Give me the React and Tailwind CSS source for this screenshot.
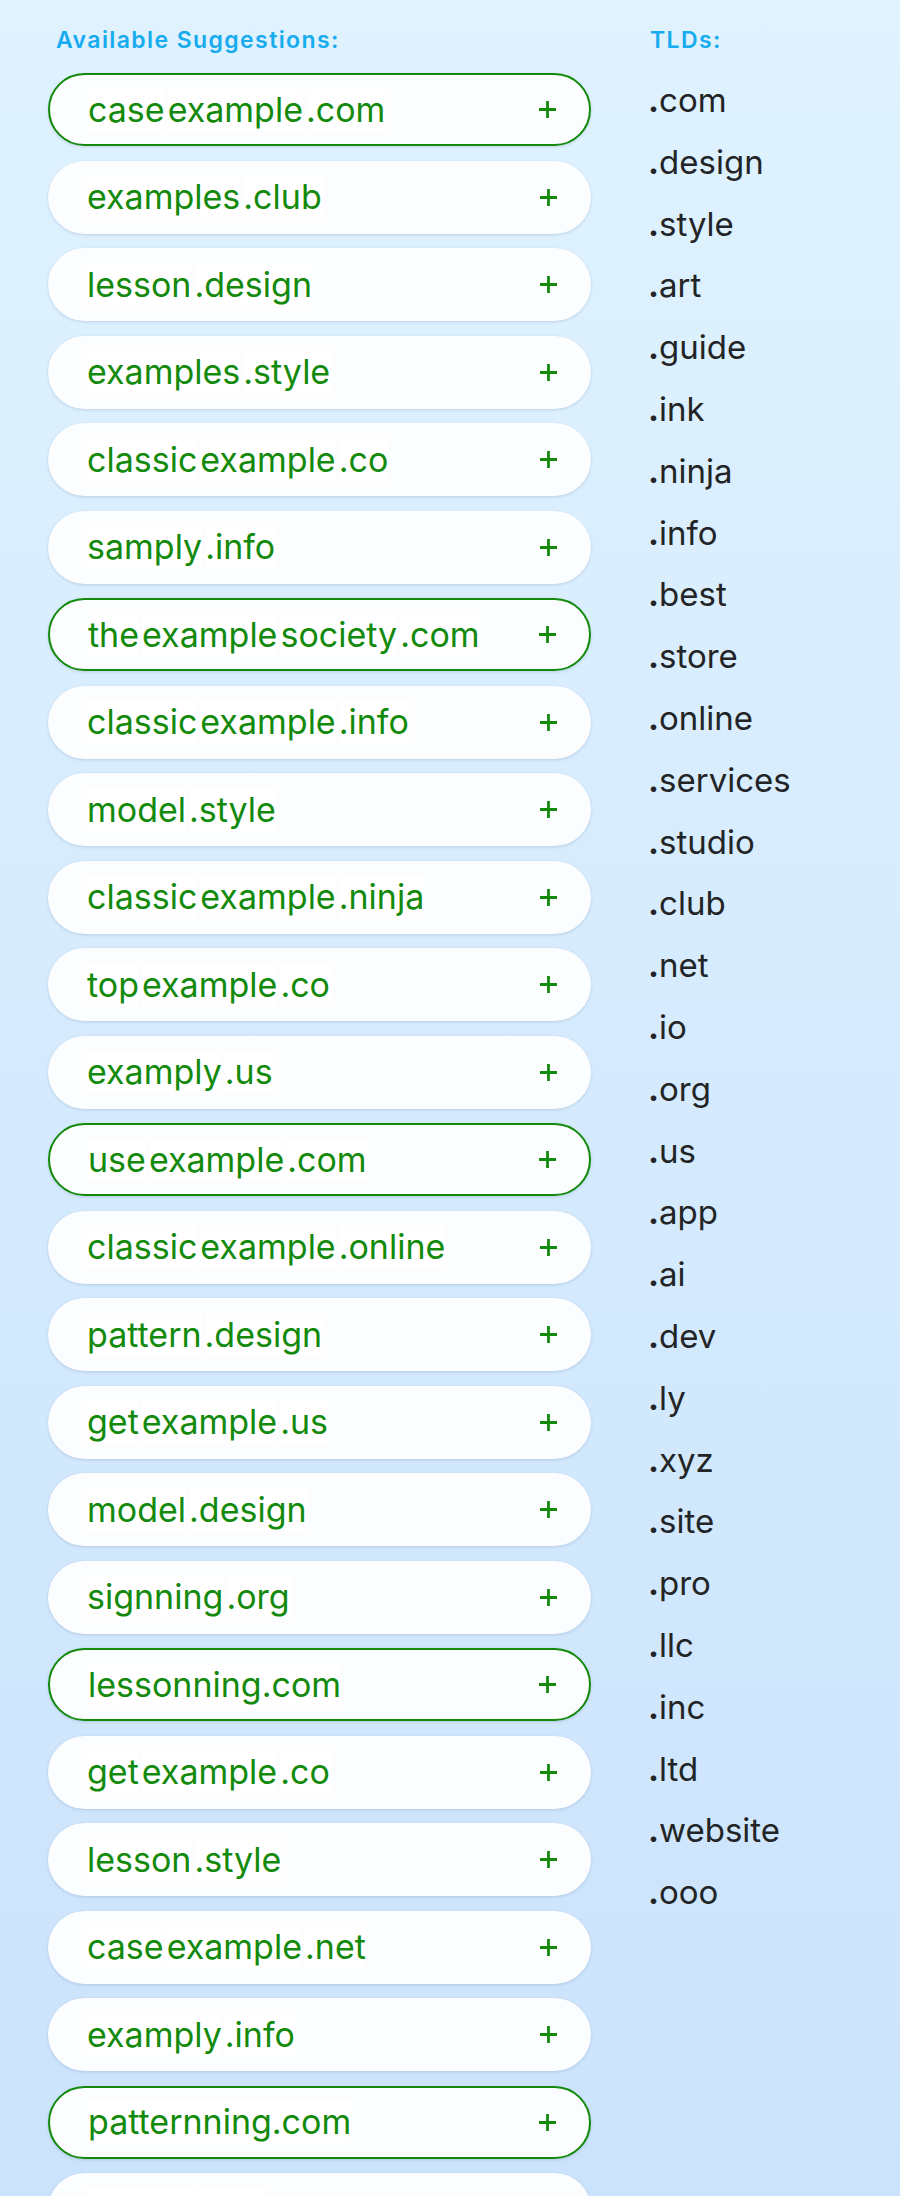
import { Fragment } from 'react';

const suggestions = [
  { parts: ['case', 'example', '.com'], picked: true },
  { parts: ['examples', '.club'] },
  { parts: ['lesson', '.design'] },
  { parts: ['examples', '.style'] },
  { parts: ['classic', 'example', '.co'] },
  { parts: ['samply', '.info'] },
  { parts: ['the', 'example', 'society', '.com'], picked: true },
  { parts: ['classic', 'example', '.info'] },
  { parts: ['model', '.style'] },
  { parts: ['classic', 'example', '.ninja'] },
  { parts: ['top', 'example', '.co'] },
  { parts: ['examply', '.us'] },
  { parts: ['use', 'example', '.com'], picked: true },
  { parts: ['classic', 'example', '.online'] },
  { parts: ['pattern', '.design'] },
  { parts: ['get', 'example', '.us'] },
  { parts: ['model', '.design'] },
  { parts: ['signning', '.org'] },
  { parts: ['lessonning.com'], picked: true },
  { parts: ['get', 'example', '.co'] },
  { parts: ['lesson', '.style'] },
  { parts: ['case', 'example', '.net'] },
  { parts: ['examply', '.info'] },
  { parts: ['patternning.com'], picked: true },
  { parts: ['lesson', '.info'] },
];

const tlds = [
  'com', 'design', 'style', 'art', 'guide', 'ink', 'ninja', 'info', 'best', 'store',
  'online', 'services', 'studio', 'club', 'net', 'io', 'org', 'us', 'app', 'ai',
  'dev', 'ly', 'xyz', 'site', 'pro', 'llc', 'inc', 'ltd', 'website', 'ooo',
];

function Plus() {
  return (
    <svg width="19" height="19" viewBox="0 0 19 19" className="shrink-0">
      <path d="M9.5 1v17M1 9.5h17" stroke="#138a0c" strokeWidth="2.8" fill="none" />
    </svg>
  );
}

function Suggestion({ parts, picked }) {
  return (
    <div
      className={
        picked
          ? 'flex h-[73px] items-center justify-between rounded-full border-2 border-[#138a0c] bg-[#fcfdff] pl-[38px] pr-[32px] shadow-[0_1px_3px_rgba(40,80,120,0.18)]'
          : 'flex h-[73px] items-center justify-between rounded-full bg-[#fcfdff] pl-[39px] pr-[33px] shadow-[0_1px_3px_rgba(40,80,120,0.18)]'
      }
    >
      <span className="flex items-center gap-[3px] text-[34px] leading-none text-[#138a0c]">
        {parts.map((p, i) => (
          <span key={i} className="bg-white py-[4px]">{p}</span>
        ))}
      </span>
      <Plus />
    </div>
  );
}

export default function App() {
  return (
    <div
      className="flex h-[2196px] overflow-hidden bg-linear-to-b from-[#dff2fe] to-[#cbe3fc]"
      style={{ fontFamily: 'Inter, "Noto Sans", sans-serif' }}
    >
      {/* suggestions */}
      <div className="ml-[48px] w-[543px] pt-[26px]">
        <h2 className="h-[28px] pl-[8px] text-[23px] font-semibold leading-[28px] tracking-[1.4px] text-[#17abef]">
          Available Suggestions:
        </h2>
        <div className="mt-[19px] flex flex-col gap-[14.5px]">
          {suggestions.map((s, i) => (
            <Suggestion key={i} {...s} />
          ))}
        </div>
      </div>

      {/* tld list */}
      <div className="ml-[57px] pt-[26px]">
        <h2 className="h-[28px] pl-[2px] text-[23px] font-semibold leading-[28px] tracking-[1.4px] text-[#17abef]">TLDs:</h2>
        <ul className="mt-[16px]">
          {tlds.map((t) => (
            <li key={t} className="h-[61.8px] text-[33px] leading-[61.8px] text-[#222426]">
              <span className="font-bold">.</span>{t}
            </li>
          ))}
        </ul>
      </div>
    </div>
  );
}
